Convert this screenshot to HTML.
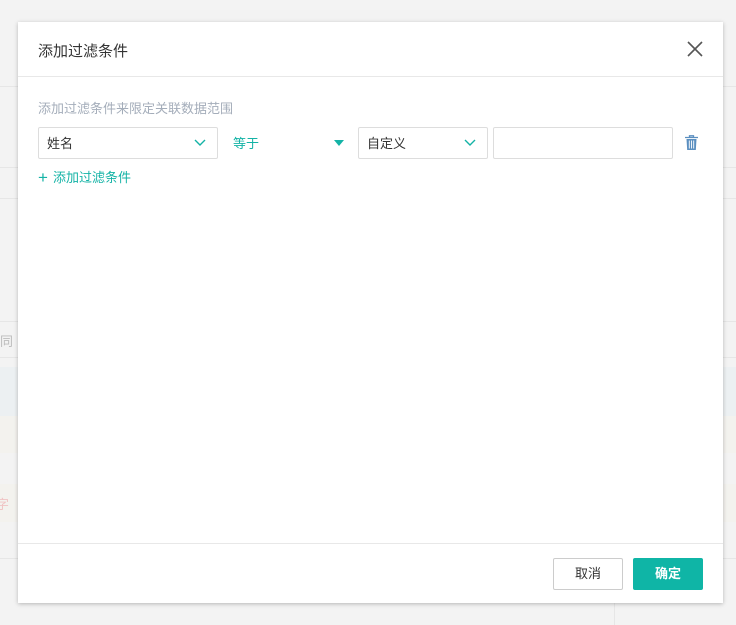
<!DOCTYPE html>
<html><head><meta charset="utf-8"><style>
*{box-sizing:border-box;margin:0;padding:0}
body{width:736px;height:625px;background:#f3f3f3;font-family:"Liberation Sans","Noto Sans CJK SC",sans-serif;position:relative;overflow:hidden}
.band{position:absolute;left:0;width:736px}
.modal{position:absolute;left:18px;top:22px;width:705px;height:581px;background:#fff;box-shadow:0 1px 4px rgba(0,0,0,.25)}
.hd{height:55px;border-bottom:1px solid #e8e8e8;position:relative}
.hd .t{position:absolute;left:20px;top:18px;font-size:15px;color:#333}
.x{position:absolute;right:20px;top:19px}
.sub{position:absolute;left:20px;top:76px;font-size:13px;color:#a4adba}
.sel{position:absolute;top:105px;height:32px;border:1px solid #ddd;border-radius:2px;font-size:13px;color:#333;padding:5px 8px}
.chev{position:absolute;right:11px;top:11px}
.ft{position:absolute;left:0;top:521px;width:705px;border-top:1px solid #e8e8e8;height:60px}
.btn{position:absolute;top:536px;width:70px;height:32px;border-radius:2px;font-size:13px;text-align:center;line-height:30px}
</style></head><body>
<div class="band" style="top:86px;height:1px;background:#e6e6e6"></div>
<div class="band" style="top:167px;height:1px;background:#e6e6e6"></div>
<div class="band" style="top:198px;height:1px;background:#e6e6e6"></div>
<div class="band" style="top:321px;height:1px;background:#e6e6e6"></div>
<div class="band" style="top:357px;height:1px;background:#e6e6e6"></div>
<div class="band" style="top:367px;height:49px;background:#ecf0f2"></div>
<div class="band" style="top:416px;height:37px;background:#f3f2ee"></div>
<div class="band" style="top:484px;height:38px;background:#f3f2ee"></div>
<div class="band" style="top:558px;height:1px;background:#e6e6e6"></div>
<div style="position:absolute;left:0;top:331px;font-size:13px;color:#bbb">同</div>
<div style="position:absolute;left:-4px;top:494px;font-size:13px;color:#f0c4c4">字</div>
<div style="position:absolute;left:614px;top:603px;width:1px;height:22px;background:#e6e6e6"></div>
<div class="modal">
 <div class="hd"><div class="t">添加过滤条件</div>
  <svg class="x" width="16" height="16" viewBox="0 0 16 16"><path d="M1 1L15 15M15 1L1 15" stroke="#555" stroke-width="1.6"/></svg></div>
 <div class="sub">添加过滤条件来限定关联数据范围</div>
 <div class="sel" style="left:20px;width:180px">姓名<svg class="chev" width="12" height="8" viewBox="0 0 12 8"><path d="M1 1L6 6L11 1" stroke="#14b3a6" stroke-width="1.4" fill="none"/></svg></div>
 <div style="position:absolute;left:215px;top:111px;font-size:13px;color:#14b3a6">等于</div>
 <svg style="position:absolute;left:316px;top:118px" width="10" height="6"><path d="M0 0H10L5 6Z" fill="#14b3a6"/></svg>
 <div class="sel" style="left:340px;width:130px">自定义<svg class="chev" width="12" height="8" viewBox="0 0 12 8"><path d="M1 1L6 6L11 1" stroke="#14b3a6" stroke-width="1.4" fill="none"/></svg></div>
 <div class="sel" style="left:475px;width:180px"></div>
 <svg style="position:absolute;left:667px;top:113px" width="13" height="15" viewBox="0 0 13 15"><path d="M0 2.5H13M4.5 2.5V0.8H8.5V2.5" stroke="#5b8fc0" stroke-width="1.3" fill="none"/><path d="M1.5 4H11.5L10.8 15H2.2Z" fill="#5b8fc0"/><path d="M4.3 5.5V13.5M6.5 5.5V13.5M8.7 5.5V13.5" stroke="#fff" stroke-width="0.9"/></svg>
 <div style="position:absolute;left:20px;top:145px;font-size:13px;color:#14b3a6"><span style="font-size:17px;position:relative;top:1px;margin-right:5px">+</span>添加过滤条件</div>
 <div class="ft"></div>
 <div class="btn" style="left:535px;border:1px solid #ccc;color:#333">取消</div>
 <div class="btn" style="left:615px;background:#0fb5a6;color:#fff;border:1px solid #0fb5a6;font-weight:bold">确定</div>
</div>
</body></html>
